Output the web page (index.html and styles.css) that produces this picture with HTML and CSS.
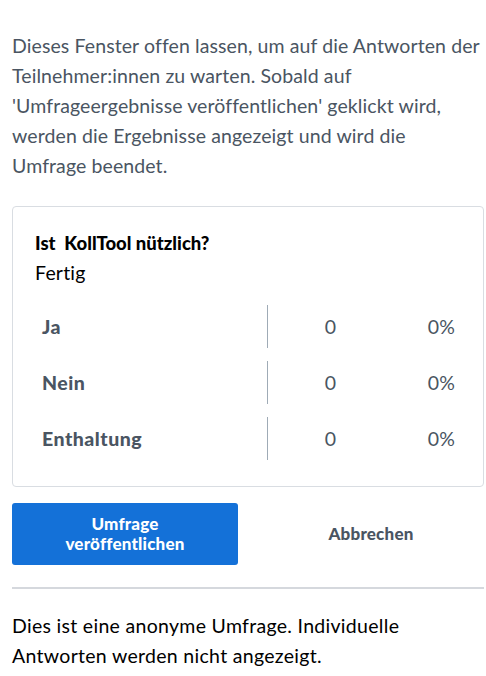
FILE: index.html
```html
<!DOCTYPE html>
<html lang="de">
<head>
<meta charset="utf-8">
<link rel="stylesheet" href="styles.css">
</head>
<body>
<main class="page">
  <p class="intro">Dieses Fenster offen lassen, um auf die Antworten der Teilnehmer:innen zu warten. Sobald auf 'Umfrageergebnisse veröffentlichen' geklickt wird, werden die Ergebnisse angezeigt und wird die Umfrage beendet.</p>
  <section class="card">
    <h2 class="title">Ist&nbsp; KollTool nützlich?</h2>
    <div class="status">Fertig</div>
    <div class="rows">
      <div class="row"><span class="label">Ja</span><span class="count">0</span><span class="pct">0%</span></div>
      <div class="row"><span class="label">Nein</span><span class="count">0</span><span class="pct">0%</span></div>
      <div class="row"><span class="label">Enthaltung</span><span class="count">0</span><span class="pct">0%</span></div>
    </div>
  </section>
  <div class="actions">
    <button class="btn primary">Umfrage<br>veröffentlichen</button>
    <button class="btn secondary">Abbrechen</button>
  </div>
  <hr class="sep">
  <p class="note">Dies ist eine anonyme Umfrage. Individuelle Antworten werden nicht angezeigt.</p>
</main>
</body>
</html>
```
FILE: styles.css
```css
* { box-sizing: border-box; }
html, body { margin: 0; padding: 0; background: #fff; }
body {
  font-family: "Lato", "Open Sans", sans-serif;
  font-size: 19.5px;
  letter-spacing: 0.2px;
  color: #000;
}
.page { padding: 31px 2px 0 12px; }
.intro {
  margin: 0;
  width: 470px;
  line-height: 30px;
  letter-spacing: 0.1px;
  color: #4a5562;
}
.card {
  margin-top: 25px;
  border: 1px solid #d9dde2;
  border-radius: 4px;
  padding: 23px 22px 26px 22px;
}
.title {
  margin: 0;
  font-size: 18.5px;
  letter-spacing: 0;
  font-weight: 900;
  line-height: 26px;
  color: #000;
}
.status {
  line-height: 26px;
  margin-top: 4px;
}
.rows {
  margin-top: 19px;
  display: flex;
  flex-direction: column;
  gap: 13px;
}
.row {
  display: grid;
  grid-template-columns: 232px 126px 1fr;
  height: 43px;
  align-items: center;
  color: #4a5562;
}
.label {
  padding-left: 7px;
  font-weight: 900;
  font-size: 19.5px;
  letter-spacing: 0.5px;
}
.count {
  text-align: center;
  border-left: 1px solid #9fabb6;
  height: 100%;
  display: flex;
  align-items: center;
  justify-content: center;
}
.pct { text-align: right; padding-right: 6px; }
.actions {
  margin-top: 16px;
  display: grid;
  grid-template-columns: 1fr 1fr;
  gap: 20px;
}
.btn {
  font-family: inherit;
  font-size: 17px;
  letter-spacing: 0.2px;
  font-weight: 900;
  line-height: 20px;
  height: 62px;
  border: 0;
  border-radius: 3px;
  padding: 0 8px;
}
.primary { background: #1471d8; color: #fff; }
.secondary { background: transparent; color: #4a5562; }
.sep {
  margin: 22px 0 0 0;
  border: 0;
  height: 2px;
  background: #d5d8dd;
}
.note {
  margin: 22px 0 0 0;
  line-height: 30px;
  letter-spacing: 0.3px;
}
```
